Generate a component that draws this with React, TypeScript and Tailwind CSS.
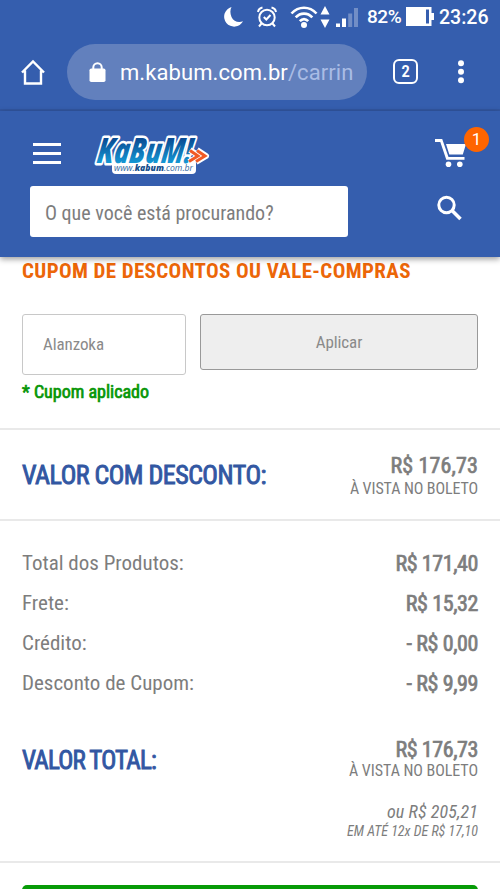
import React from 'react';

const summaryRows = [
  { label: 'Total dos Produtos:', value: 'R$ 171,40' },
  { label: 'Frete:', value: 'R$ 15,32' },
  { label: 'Crédito:', value: '- R$ 0,00' },
  { label: 'Desconto de Cupom:', value: '- R$ 9,99' },
];

const StatusBar = () => (
  <div className="flex h-[34px] items-center text-[19px] font-medium tracking-tight text-white">
    <svg className="ml-[224px] shrink-0" width="20" height="22" viewBox="0 0 20 22" fill="currentColor">
      <path d="M7.500 1A10 10 0 1 0 19 15.300C14.500 17 9.500 15.500 7.500 11C6 7.500 6 4 7.500 1Z" />
    </svg>
    <svg className="ml-[13px] shrink-0" width="20" height="22" viewBox="0 0 20 22" fill="none" stroke="currentColor" strokeWidth="2">
      <circle cx="10" cy="11.5" r="7.7" />
      <path d="M1 6C1.4 3.6 3 2 5.5 1.5M19 6C18.6 3.6 17 2 14.5 1.5M4.5 17.5L2 20.5M15.5 17.5L18 20.5M6.8 11L9.3 13.5L13.5 9" />
    </svg>
    <svg className="ml-[13px] shrink-0" width="28" height="24" viewBox="0 0 28 24" fill="none" stroke="currentColor" strokeWidth="2.6">
      <path d="M1.5 8.5C8.5 0.8 19.5 0.8 26.5 8.5M5.7 12.4C10.3 7.3 17.7 7.3 22.3 12.4M9.8 16.2C12.4 13.4 15.6 13.4 18.2 16.2" />
      <circle cx="14" cy="20" r="3" fill="currentColor" stroke="none" />
    </svg>
    <svg className="ml-[2px] shrink-0" width="10" height="22" viewBox="0 0 10 22" fill="currentColor">
      <path d="M5 0L9.5 8.5H.5ZM5 22L9.5 13.5H.5Z" />
    </svg>
    <svg className="ml-[6px] shrink-0" width="22" height="22" viewBox="0 0 22 22" fill="currentColor">
      <path d="M0 17.500h4V21H0ZM6 12.500h4V21H6Z" />
      <path d="M12.2 7.500h4V21h-4ZM18 2h4v19h-4Z" opacity=".3" />
    </svg>
    <span className="ml-[9px] w-[36px] whitespace-nowrap pt-px">82%</span>
    <svg className="ml-[3px] shrink-0" width="28" height="22" viewBox="0 0 28 22" fill="currentColor">
      <path fillRule="evenodd" d="M0 1h25.500v6H28v7h-2.500V20H0ZM20 3.500v14h3v-14Z" />
    </svg>
    <span className="ml-[5px] pt-px text-[19.5px] tracking-normal">23:26</span>
  </div>
);

const BrowserBar = () => (
  <div className="flex h-[77px] items-center border-b-2 border-[#3257a2] text-white">
    <svg className="ml-[20px] shrink-0" width="26" height="26" viewBox="0 0 26 26" fill="none" stroke="currentColor" strokeWidth="2.4">
      <path d="M2 13.500L13 2.500L24 13.500M5 11.500V24.500H21V11.500" />
    </svg>
    <div className="ml-[21px] flex h-14 w-[300px] shrink-0 items-center rounded-full bg-[#6280bd]">
      <svg className="ml-[22px] shrink-0" width="17" height="20" viewBox="0 0 17 20">
        <rect x="0.500" y="6.500" width="16" height="13.500" rx="1.800" fill="currentColor" />
        <path d="M4.300 8V5.500A4.200 4.200 0 0 1 12.700 5.500V8" fill="none" stroke="currentColor" strokeWidth="2" />
      </svg>
      <span className="ml-[14px] mt-px whitespace-nowrap text-[22px] tracking-[0.08px]">
        m.kabum.com.br<span className="text-[#a9bce5]">/carrin</span>
      </span>
    </div>
    <div className="ml-[26px] flex size-[25px] items-center justify-center rounded-md border-[2.5px] border-white text-[16px] font-bold">
      <span className="scale-x-90">2</span>
    </div>
    <svg className="ml-[40px] shrink-0" width="6" height="24" viewBox="0 0 6 24" fill="currentColor">
      <circle cx="3" cy="3.300" r="3" />
      <circle cx="3" cy="11.800" r="3" />
      <circle cx="3" cy="20.300" r="3" />
    </svg>
  </div>
);

const Logo = () => (
  <svg width="118" height="44" viewBox="0 0 118 44" className="overflow-visible font-['Open_Sans',sans-serif]">
    <defs>
      <linearGradient id="logoBlue" x1="0" y1="0" x2="0" y2="1">
        <stop offset="0.3" stopColor="#0a4c94" />
        <stop offset="0.8" stopColor="#1598d4" />
      </linearGradient>
    </defs>
    <rect x="20" y="28" width="84" height="15" rx="4" fill="#fff" />
    <text
      transform="translate(4 31.500) skewX(-8)"
      fontSize="35"
      fontWeight="800"
      fontStyle="italic"
      textLength="95"
      lengthAdjust="spacingAndGlyphs"
      stroke="#fff"
      strokeWidth="5"
      strokeLinejoin="round"
      className="fill-[url(#logoBlue)] [paint-order:stroke]"
    >
      KaBuM!
    </text>
    <path d="M98 19L107 25L97 31M105 19L114 25L104 31" fill="none" stroke="#fff" strokeWidth="6" strokeLinejoin="round" />
    <path d="M98 19.500L106 25L97 30.500M105 19.500L113 25L104 30.500" fill="none" stroke="#f15a24" strokeWidth="3" />
    <text x="22" y="40" fontSize="9.500" fontStyle="italic" fill="#356a9f" textLength="79" lengthAdjust="spacingAndGlyphs">
      www.<tspan fontWeight="800" fill="#164f8c">kabum</tspan>.com.br
    </text>
  </svg>
);

const SiteHeader = () => (
  <header className="relative z-10 h-[146px] bg-[#355eae] text-white shadow-[0_2px_6px_rgba(0,0,0,0.4)]">
    <div className="flex h-[75px] items-start">
      <div className="ml-[33px] mt-[32px] flex w-7 flex-col gap-[6px]">
        <span className="h-[3px] bg-white" />
        <span className="h-[3px] bg-white" />
        <span className="h-[3px] bg-white" />
      </div>
      <div className="ml-[31px] mt-[20px]">
        <Logo />
      </div>
      <div className="relative ml-auto mr-[34px] mt-[27px]">
        <svg width="31" height="30" viewBox="0 0 31 30" fill="currentColor">
          <path d="M0 1H7.200L13.500 19H29.500V21.800H11.300L5.300 4H0ZM11 6H31L27.800 16.500H14.300Z" />
          <circle cx="13.500" cy="26.300" r="2.800" />
          <circle cx="24.800" cy="26.300" r="2.800" />
        </svg>
        <span className="absolute -top-[11px] left-[29px] flex size-[25px] items-center justify-center rounded-full bg-[#ff6500] text-[17px]">
          1
        </span>
      </div>
    </div>
    <div className="flex">
      <div className="ml-[30px] flex h-[51px] w-[318px] items-center rounded-[3px] bg-white pl-[15px] pt-[3px] font-['Roboto_Condensed',Roboto,sans-serif] text-[20px] text-[#7d7d7d]">
        O que você está procurando?
      </div>
      <svg className="ml-[89px] mt-[9px]" width="25" height="26" viewBox="0 0 25 26" fill="none" stroke="currentColor" strokeWidth="3">
        <circle cx="9.500" cy="10" r="7.700" />
        <path d="M15 15.500L23.500 24" strokeWidth="3.600" />
      </svg>
    </div>
  </header>
);

export default function App() {
  return (
    <div className="h-[889px] w-[500px] overflow-hidden bg-white font-[Roboto,sans-serif]">
      <div className="bg-[#355eae]">
        <StatusBar />
        <BrowserBar />
      </div>
      <SiteHeader />
      <main className="font-['Roboto_Condensed',Roboto,sans-serif] text-[#7d7d7d]">
        <section className="h-[173px] border-b-2 border-[#e9e9e9] px-[22px]">
          <h2 className="h-[57px] whitespace-nowrap text-[21px] font-bold leading-[29px] tracking-[0.37px] text-[#ec6608]">
            CUPOM DE DESCONTOS OU VALE-COMPRAS
          </h2>
          <div className="flex items-start gap-[14px]">
            <div className="flex h-[61px] w-[164px] items-center rounded-[3px] border border-[#c8c8c8] pl-5 pt-px text-[17px] tracking-[-0.1px] text-[#8a8a8a]">
              Alanzoka
            </div>
            <button className="h-[56px] flex-1 rounded-[3px] border border-[#999] bg-[#eee] pt-px text-[17px] tracking-[-0.1px] text-[#8a8a8a]">
              Aplicar
            </button>
          </div>
          <p className="text-[18px] leading-[34px] text-[#079607] [-webkit-text-stroke:0.7px]">* Cupom aplicado</p>
        </section>
        <section className="flex h-[91px] items-center justify-between border-b-2 border-[#e9e9e9] px-[22px] pt-[5px]">
          <h3 className="-mt-[3px] whitespace-nowrap text-[26px] tracking-[-0.51px] text-[#3257a2] [-webkit-text-stroke:0.9px]">
            VALOR COM DESCONTO:
          </h3>
          <div className="text-right">
            <p className="text-[22px] leading-[24px] tracking-[0.15px] [-webkit-text-stroke:0.7px]">R$ 176,73</p>
            <p className="text-[16px] leading-[22px] tracking-[-0.1px]">À VISTA NO BOLETO</p>
          </div>
        </section>
        <section className="h-[342px] border-b-2 border-[#e9e9e9] px-[22px] pt-[22px]">
          {summaryRows.map(row => (
            <div key={row.label} className="flex h-10 items-center justify-between text-[21px]">
              <span className="pt-[2px]">{row.label}</span>
              <span className="text-[22px] tracking-[-0.4px] [-webkit-text-stroke:0.7px]">{row.value}</span>
            </div>
          ))}
          <div className="mt-[35px] flex items-start justify-between">
            <h3 className="text-[25px] leading-[46px] tracking-[-0.8px] text-[#3257a2] [-webkit-text-stroke:0.9px]">VALOR TOTAL:</h3>
            <div className="text-right">
              <p className="text-[22px] leading-[24px] tracking-[-0.4px] [-webkit-text-stroke:0.7px]">R$ 176,73</p>
              <p className="text-[16px] leading-[18px] tracking-[-0.05px]">À VISTA NO BOLETO</p>
              <p className="mt-[20px] text-[18px] italic leading-[24px] tracking-[0.1px]">ou R$ 205,21</p>
              <p className="text-[14px] italic leading-[14px]">EM ATÉ 12x DE R$ 17,10</p>
            </div>
          </div>
        </section>
        <div className="mx-[22px] mt-[22px] h-14 rounded-[5px] bg-[#079b07]" />
      </main>
    </div>
  );
}
